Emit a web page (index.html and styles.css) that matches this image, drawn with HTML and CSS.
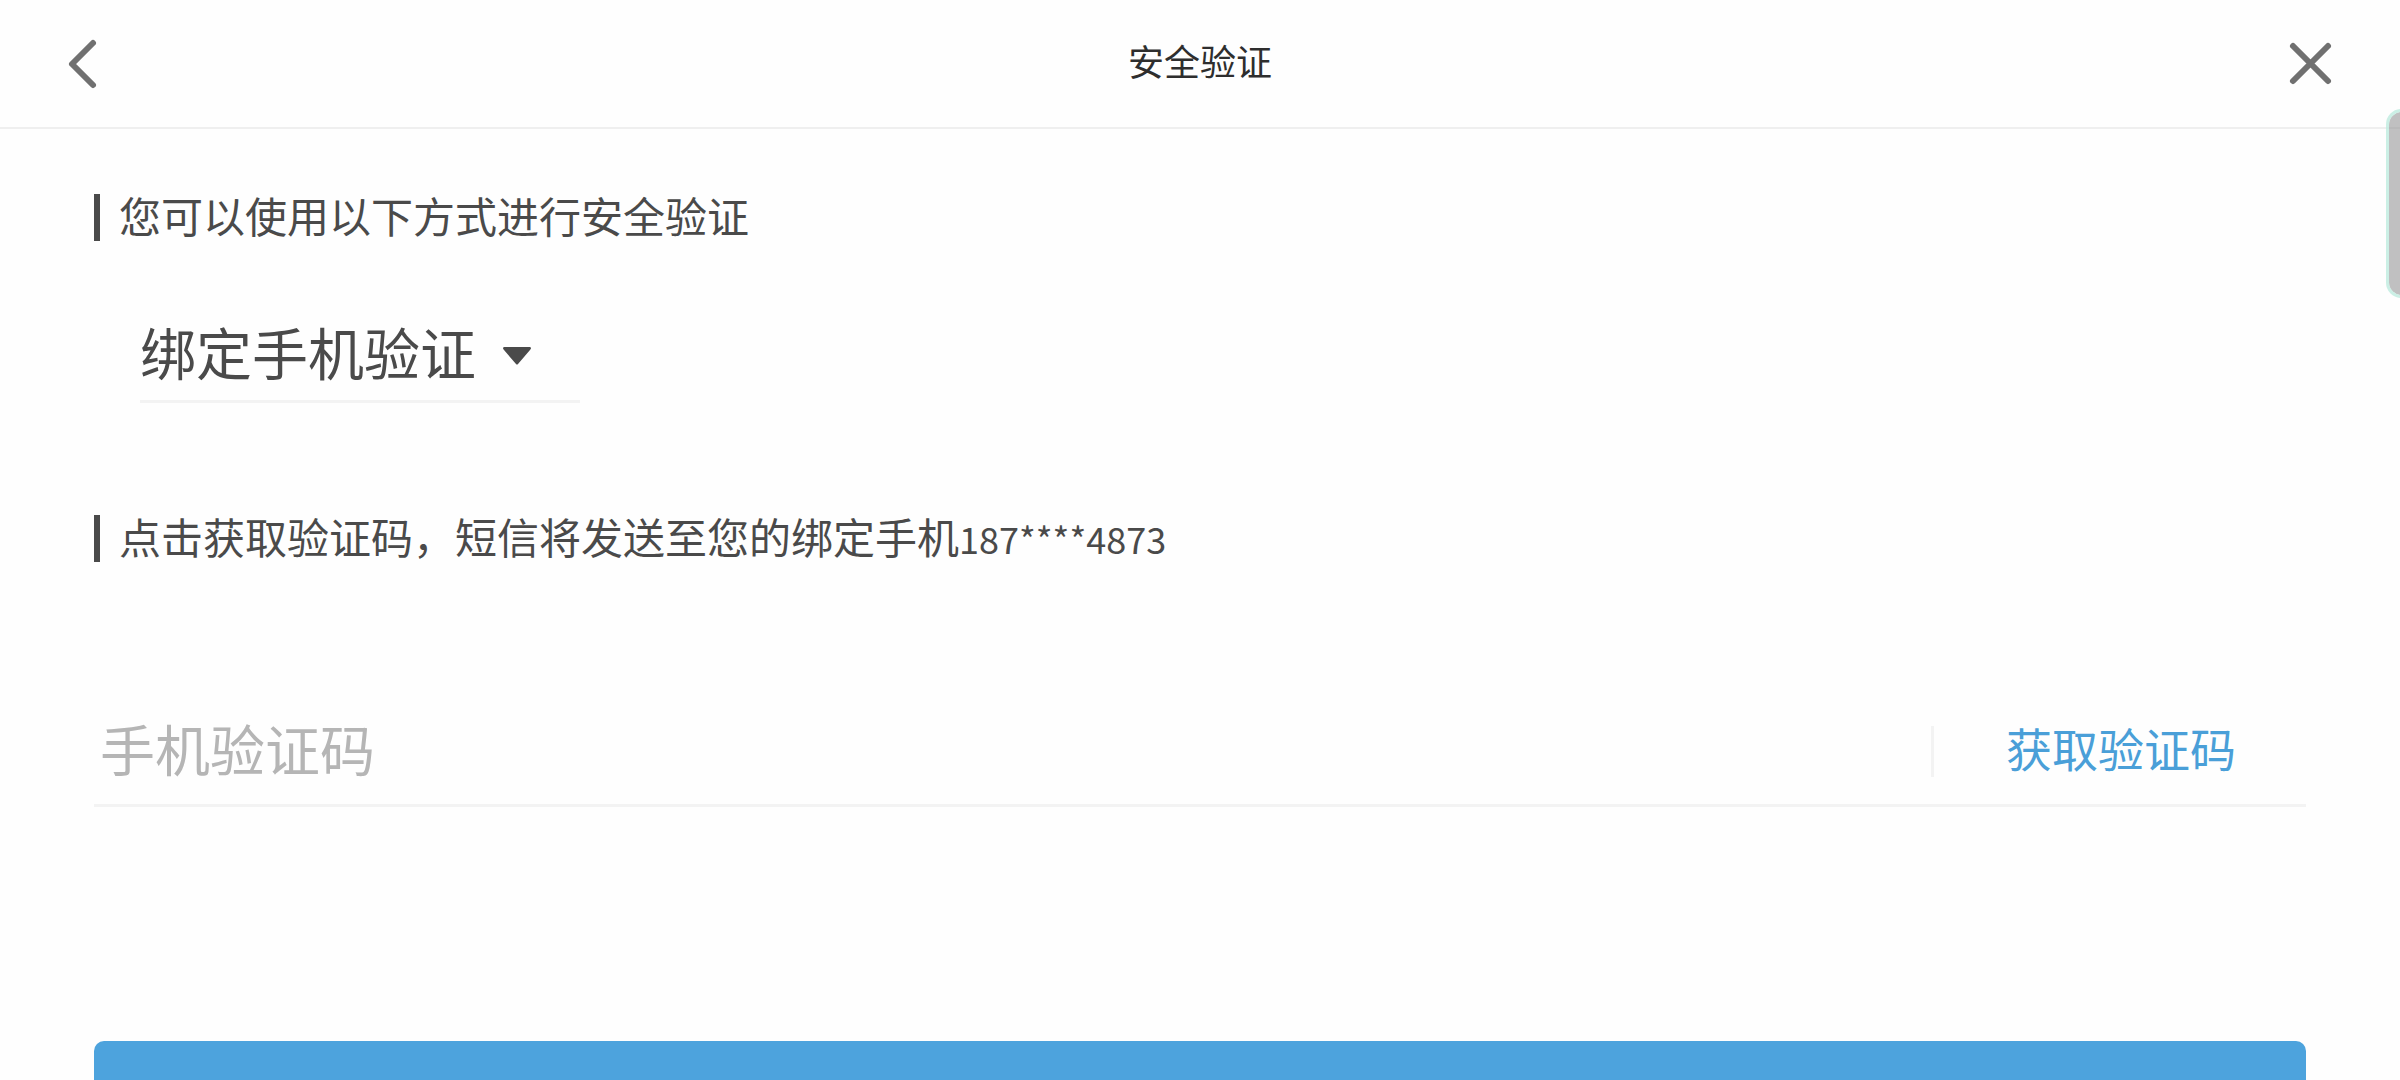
FILE: index.html
```html
<!DOCTYPE html>
<html lang="zh-CN">
<head>
<meta charset="utf-8">
<meta name="viewport" content="width=device-width, initial-scale=1">
<title>安全验证</title>
<link rel="stylesheet" href="styles.css">
</head>
<body>
<div class="page">
  <header class="header">
    <button class="icon-button" type="button" aria-label="返回">
      <svg class="icon" viewBox="0 0 56 56" aria-hidden="true"><path d="M33 7 12 28l21 21"/></svg>
    </button>
    <h1 class="title">安全验证</h1>
    <button class="icon-button" type="button" aria-label="关闭">
      <svg class="icon" viewBox="0 0 56 56" aria-hidden="true"><path d="m9 10 35 35M44 10 9 45"/></svg>
    </button>
  </header>
  <main class="content">
    <label class="prompt" for="method">您可以使用以下方式进行安全验证</label>
    <div class="method">
      <select class="method-select" id="method">
        <option>绑定手机验证</option>
      </select>
      <svg class="method-arrow" viewBox="0 0 28 18" aria-hidden="true"><path d="M1 0h26q2 1 0 3L15 17q-1 1-2 0L1 3q-2-2 0-3z"/></svg>
    </div>
    <label class="prompt prompt-code" for="code"><span>点击获取验证码，短信将发送至您的绑定手机<span class="phone">187****4873</span></span></label>
    <div class="code-row">
      <input class="code-input" id="code" type="text" inputmode="numeric" placeholder="手机验证码">
      <button class="code-button" type="button">获取验证码</button>
    </div>
    <button class="submit" type="submit" aria-label="验证"></button>
  </main>
  <div class="edge-handle"></div>
</div>
</body>
</html>
```
FILE: styles.css
```css
* {
  box-sizing: border-box;
}

body {
  margin: 0;
  background: #fefefe;
  color: #4a4a4a;
  font-family: "Noto Sans CJK SC", sans-serif;
}

button,
input,
select {
  margin: 0;
  padding: 0;
  border: 0;
  background: none;
  color: inherit;
  font-family: inherit;
  outline: none;
}

.page {
  position: relative;
  height: 100vh;
  overflow: hidden;
}

.header {
  display: flex;
  align-items: center;
  justify-content: space-between;
  padding: 36px 60px 35px;
  border-bottom: 2px solid #efefef;
}

.icon-button {
  width: 56px;
  height: 56px;
}

.icon {
  display: block;
  width: 56px;
  height: 56px;
  fill: none;
  stroke: #707070;
  stroke-width: 6;
  stroke-linecap: round;
  stroke-linejoin: round;
}

.title {
  margin: 0;
  padding-bottom: 8px;
  color: #2e2e2e;
  font-size: 36px;
  font-weight: 400;
  line-height: 48px;
}

.content {
  display: flex;
  flex-direction: column;
  padding: 65px 94px 0;
}

.prompt {
  padding: 0 0 6px 19px;
  border-left: 6px solid #4a4a4a;
  font-size: 42px;
  line-height: 41px;
}

.prompt-code {
  margin-top: 112px;
}

.phone {
  font-size: 36px;
  line-height: 1;
}

.method {
  position: relative;
  width: 440px;
  margin: 68px 0 0 46px;
}

.method-select {
  display: block;
  width: 100%;
  height: 94px;
  padding-bottom: 8px;
  border-bottom: 3px solid #f3f3f3;
  border-radius: 0;
  appearance: none;
  font-size: 56px;
}

.method-arrow {
  position: absolute;
  top: 38px;
  right: 49px;
  width: 28px;
  height: 18px;
  fill: #4a4a4a;
  pointer-events: none;
}

.code-row {
  display: flex;
  align-items: center;
  height: 109px;
  margin-top: 136px;
  border-bottom: 3px solid #f3f3f3;
}

.code-input {
  flex: 1;
  min-width: 0;
  height: 100%;
  padding: 0 0 8px 6px;
  font-size: 55px;
}

.code-input::placeholder {
  color: #b5b5b5;
  opacity: 1;
}

.code-button {
  padding: 0 70px 8px 72px;
  border-left: 3px solid #f3f3f3;
  color: #4a9fd8;
  font-size: 46px;
  line-height: 43px;
}

.submit {
  height: 132px;
  margin-top: 234px;
  border-radius: 10px;
  background: #4da3dd;
}

.edge-handle {
  position: absolute;
  top: 109px;
  right: -17px;
  width: 31px;
  height: 189px;
  border: 3px solid rgba(190, 235, 222, 0.8);
  border-radius: 16px;
  background: rgba(140, 140, 142, 0.55);
  background-clip: padding-box;
}
```
